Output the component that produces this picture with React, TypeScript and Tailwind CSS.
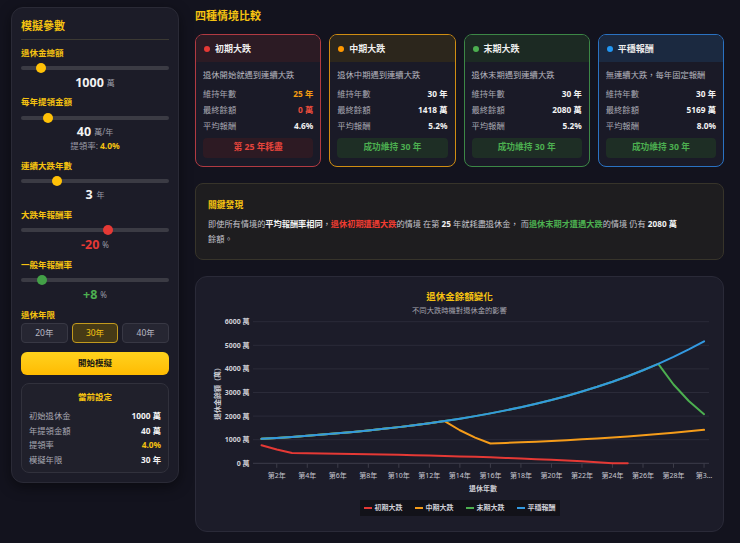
import React from "react";

type Slid = { thumb: string };

function Slider({ thumb }: Slid) {
  return (
    <div className="relative h-[14px] flex items-center">
      <div className="h-[4px] w-full rounded-full bg-[#3b3b44]" />
      <div className={"absolute top-[2px] h-[10px] w-[10px] rounded-full " + thumb} />
    </div>
  );
}

function Label({ children, cls }: { children: React.ReactNode; cls: string }) {
  return <div className={"h-4 leading-4 text-[8.5px] font-bold text-[#f5c211] " + cls}>{children}</div>;
}

function sim(crashStart: number | null): number[] {
  const out: number[] = [];
  let bal = 1000;
  for (let y = 1; y <= 30; y++) {
    const crash = crashStart !== null && y >= crashStart && y < crashStart + 3;
    bal = (bal - 40) * (crash ? 0.8 : 1.08);
    if (bal <= 0) {
      out.push(0);
      break;
    }
    out.push(bal);
  }
  return out;
}

const X = (year: number) => 260.5 + (year - 1) * 15.26 - 196;
const Y = (v: number) => 463.3 - v * 0.0236 - 315;

const cards = [
  {
    name: "初期大跌",
    dot: "bg-[#e53935]",
    border: "border-[#b13a42]",
    header: "bg-[#2c1b24]",
    desc: "退休開始就遇到連續大跌",
    years: "25 年",
    yearsCls: "text-[#f39c12]",
    final: "0 萬",
    finalCls: "text-[#e74c3c]",
    avg: "4.6%",
    status: "第 25 年耗盡",
    statusCls: "bg-[#2d1a23] text-[#e5453c]",
  },
  {
    name: "中期大跌",
    dot: "bg-[#ff9800]",
    border: "border-[#cf8d12]",
    header: "bg-[#2c261c]",
    desc: "退休中期遇到連續大跌",
    years: "30 年",
    yearsCls: "text-[#f2f2f2]",
    final: "1418 萬",
    finalCls: "text-[#f2f2f2]",
    avg: "5.2%",
    status: "成功維持 30 年",
    statusCls: "bg-[#1e2e25] text-[#4caf50]",
  },
  {
    name: "末期大跌",
    dot: "bg-[#4caf50]",
    border: "border-[#3c8746]",
    header: "bg-[#1c2a23]",
    desc: "退休末期遇到連續大跌",
    years: "30 年",
    yearsCls: "text-[#f2f2f2]",
    final: "2080 萬",
    finalCls: "text-[#f2f2f2]",
    avg: "5.2%",
    status: "成功維持 30 年",
    statusCls: "bg-[#1e2e25] text-[#4caf50]",
  },
  {
    name: "平穩報酬",
    dot: "bg-[#2196f3]",
    border: "border-[#2a72c2]",
    header: "bg-[#1b2940]",
    desc: "無連續大跌，每年固定報酬",
    years: "30 年",
    yearsCls: "text-[#f2f2f2]",
    final: "5169 萬",
    finalCls: "text-[#f2f2f2]",
    avg: "8.0%",
    status: "成功維持 30 年",
    statusCls: "bg-[#1e2e25] text-[#4caf50]",
  },
];

function Chart() {
  const series = [
    { data: sim(1), color: "#e53935" },
    { data: sim(14), color: "#f59c1a" },
    { data: sim(28), color: "#4caf50" },
    { data: sim(null), color: "#3399e0" },
  ];
  const ticks = [0, 1000, 2000, 3000, 4000, 5000, 6000];
  const evenYears = [2, 4, 6, 8, 10, 12, 14, 16, 18, 20, 22, 24, 26, 28, 30];
  return (
    <svg width={526} height={181} className="block">
      {ticks.map((t) => (
        <g key={t}>
          <line
            x1={56}
            x2={512}
            y1={Y(t)}
            y2={Y(t)}
            stroke={t === 0 ? "#3d3d4a" : "#2b2b39"}
            strokeWidth={1}
          />
          <text
            x={52.5}
            y={Y(t)}
            textAnchor="end"
            dominantBaseline="central"
            fontSize={7}
            fontWeight={700}
            fill="#cfcfd6"
          >
            {t} 萬
          </text>
        </g>
      ))}
      {evenYears.map((yr) => (
        <g key={yr}>
          <line x1={X(yr)} x2={X(yr)} y1={Y(0)} y2={Y(0) + 4.5} stroke="#3d3d4a" strokeWidth={1} />
          <text
            x={X(yr)}
            y={160.7}
            textAnchor="middle"
            dominantBaseline="central"
            fontSize={7}
            fill="#c8c8d0"
          >
            {yr === 30 ? "第3…" : `第${yr}年`}
          </text>
        </g>
      ))}
      {series.map((s, i) => (
        <polyline
          key={i}
          fill="none"
          stroke={s.color}
          strokeWidth={2}
          strokeLinejoin="round"
          strokeLinecap="round"
          points={s.data.map((v, j) => `${X(j + 1)},${Y(v)}`).join(" ")}
        />
      ))}
      <text
        x={286}
        y={173}
        textAnchor="middle"
        dominantBaseline="central"
        fontSize={7}
        fontWeight={700}
        fill="#cfcfd6"
      >
        退休年數
      </text>
      <text
        x={20}
        y={77}
        textAnchor="middle"
        dominantBaseline="central"
        fontSize={7}
        fontWeight={700}
        fill="#cfcfd6"
        transform="rotate(-90 20 77)"
      >
        退休金餘額（萬）
      </text>
    </svg>
  );
}

export default function App() {
  return (
    <div className="w-[740px] h-[543px] overflow-hidden bg-[#13131e] flex items-start pt-[7px] pl-[11px] font-['Noto_Sans','Noto_Sans_CJK_TC',sans-serif]">
      {/* Left panel */}
      <div className="w-[168px] shrink-0 rounded-xl border border-[#2a2a36] bg-[#1c1c28] px-[9px] pb-[9px] shadow-[0_4px_14px_rgba(0,0,0,0.45)] flex flex-col">
        <div className="pt-[8px] h-[28px] leading-[20px] text-[11px] font-bold text-[#f5c211]">模擬參數</div>
        <div className="mt-[3px] border-t border-[#3b3933]" />

        <Label cls="mt-[5px]">退休金總額</Label>
        <Slider thumb="left-[15px] bg-[#ffc107]" />
        <div className="mt-[1px] h-[14px] flex items-center justify-center">
          <span className="text-[12.5px] font-bold text-[#f2f2f2]">1000</span>
          <span className="ml-[3px] text-[8px] text-[#9a9aa5]">萬</span>
        </div>

        <Label cls="mt-[4px]">每年提領金額</Label>
        <div className="mt-[1px]">
          <Slider thumb="left-[22px] bg-[#ffc107]" />
        </div>
        <div className="h-[14px] flex items-center justify-center">
          <span className="text-[12.5px] font-bold text-[#f2f2f2]">40</span>
          <span className="ml-[3px] text-[8px] text-[#9a9aa5]">萬/年</span>
        </div>
        <div className="h-[14px] flex items-center justify-center text-[8.5px] text-[#9a9aa5]">
          提領率: <span className="ml-[2px] font-bold text-[#f5c211]">4.0%</span>
        </div>

        <Label cls="mt-[5px]">連續大跌年數</Label>
        <Slider thumb="left-[31px] bg-[#ffc107]" />
        <div className="h-[14px] flex items-center justify-center">
          <span className="text-[12.5px] font-bold text-[#f2f2f2]">3</span>
          <span className="ml-[4px] text-[8px] text-[#9a9aa5]">年</span>
        </div>

        <Label cls="mt-[5px]">大跌年報酬率</Label>
        <Slider thumb="left-[82px] bg-[#e53935]" />
        <div className="mt-[1px] h-[14px] flex items-center justify-center">
          <span className="text-[12.5px] font-bold text-[#e53935]">-20</span>
          <span className="ml-[3px] text-[8px] text-[#9a9aa5]">%</span>
        </div>

        <Label cls="mt-[5px]">一般年報酬率</Label>
        <Slider thumb="left-[16px] bg-[#43a047]" />
        <div className="mt-[1px] h-[14px] flex items-center justify-center">
          <span className="text-[12.5px] font-bold text-[#4caf50]">+8</span>
          <span className="ml-[3px] text-[8px] text-[#9a9aa5]">%</span>
        </div>

        <Label cls="mt-[5px]">退休年限</Label>
        <div className="grid grid-cols-3 gap-[4px] h-[20px]">
          <div className="flex items-center justify-center rounded-[4px] border border-[#383844] bg-[#262632] text-[8.5px] text-[#b8b8c2]">20年</div>
          <div className="flex items-center justify-center rounded-[4px] border border-[#c29a1e] bg-[#463a16] text-[8.5px] text-[#f5c211]">30年</div>
          <div className="flex items-center justify-center rounded-[4px] border border-[#383844] bg-[#262632] text-[8.5px] text-[#b8b8c2]">40年</div>
        </div>

        <div className="mt-[9px] h-[23px] rounded-md bg-linear-to-b from-[#ffd21c] to-[#ffbb00] flex items-center justify-center text-[8.5px] font-bold text-[#1c1a14]">開始模擬</div>

        <div className="mt-[8px] h-[90px] rounded-lg border border-[#31313c] bg-[#20202b] px-[7px] pt-[6px]">
          <div className="h-[14px] leading-[14px] text-center text-[8.5px] font-bold text-[#f5c211]">當前設定</div>
          <div className="mt-[5px]">
            {[
              ["初始退休金", "1000 萬", "text-[#f2f2f2]"],
              ["年提領金額", "40 萬", "text-[#f2f2f2]"],
              ["提領率", "4.0%", "text-[#f5c211]"],
              ["模擬年限", "30 年", "text-[#f2f2f2]"],
            ].map(([a, b, c]) => (
              <div key={a} className="h-[14.5px] flex items-center justify-between text-[8.3px]">
                <span className="text-[#a8a8b2]">{a}</span>
                <span className={"font-bold " + c}>{b}</span>
              </div>
            ))}
          </div>
        </div>
      </div>

      {/* Right content */}
      <div className="ml-[16px] w-[529px] shrink-0">
        <div className="mt-[1px] h-4 leading-4 text-[11px] font-bold text-[#f5c211]">四種情境比較</div>

        <div className="mt-[10px] grid grid-cols-4 gap-[8px] h-[133px]">
          {cards.map((c) => (
            <div key={c.name} className={"rounded-lg border overflow-hidden bg-[#1a1a27] flex flex-col " + c.border}>
              <div className={"h-[27px] shrink-0 flex items-center px-[8px] " + c.header}>
                <span className={"w-[6px] h-[6px] rounded-full " + c.dot} />
                <span className="ml-[5px] text-[9px] font-bold text-[#eeeeee]">{c.name}</span>
              </div>
              <div className="px-[7px] pt-[6px]">
                <div className="h-[14px] leading-[14px] text-[8.3px] text-[#b6b6bf] whitespace-nowrap">{c.desc}</div>
                <div className="mt-[4px]">
                  <div className="h-4 flex items-center justify-between text-[8.3px]">
                    <span className="text-[#a8a8b2]">維持年數</span>
                    <span className={"font-bold " + c.yearsCls}>{c.years}</span>
                  </div>
                  <div className="h-4 flex items-center justify-between text-[8.3px]">
                    <span className="text-[#a8a8b2]">最終餘額</span>
                    <span className={"font-bold " + c.finalCls}>{c.final}</span>
                  </div>
                  <div className="h-4 flex items-center justify-between text-[8.3px]">
                    <span className="text-[#a8a8b2]">平均報酬</span>
                    <span className="font-bold text-[#f2f2f2]">{c.avg}</span>
                  </div>
                </div>
                <div className={"mt-[4px] h-5 rounded-[4px] flex items-center justify-center text-[8.7px] font-bold " + c.statusCls}>
                  {c.status}
                </div>
              </div>
            </div>
          ))}
        </div>

        <div className="mt-[16px] h-[77px] rounded-lg border border-[#37342a] bg-[#1e1d1f] px-[12px] pt-[14px]">
          <div className="h-[14px] leading-[14px] text-[8.8px] font-bold text-[#f5c211]">關鍵發現</div>
          <p className="mt-[5px] max-w-[474px] text-[8.2px] leading-[14.5px] text-[#c4c4cc]">
            即使所有情境的<span className="font-bold text-[#f2f2f2]">平均報酬率相同</span>，
            <span className="font-bold text-[#f03c32]">退休初期遭遇大跌</span>的情境 在第{" "}
            <span className="font-bold text-[#f2f2f2]">25</span> 年就耗盡退休金， 而
            <span className="font-bold text-[#4caf50]">退休末期才遭遇大跌</span>的情境 仍有{" "}
            <span className="font-bold text-[#f2f2f2]">2080 萬</span>餘額。
          </p>
        </div>

        <div className="mt-[16px] h-[256px] rounded-xl border border-[#2a2a38] bg-[#1c1c29] flex flex-col items-center">
          <div className="mt-[13px] h-[14px] leading-[14px] text-[9.5px] font-bold text-[#f5c211]">退休金餘額變化</div>
          <div className="mt-[1px] h-[10px] leading-[10px] text-[7.3px] text-[#a4a4ae]">不同大跌時機對退休金的影響</div>
          <Chart />
          <div className="mt-[4px] h-[16px] bg-[#121219] px-[4px] flex items-center gap-[12px]">
            {[
              ["初期大跌", "bg-[#e53935]"],
              ["中期大跌", "bg-[#f59c1a]"],
              ["末期大跌", "bg-[#4caf50]"],
              ["平穩報酬", "bg-[#3399e0]"],
            ].map(([n, c]) => (
              <div key={n} className="flex items-center">
                <span className={"w-[8px] h-[2px] " + c} />
                <span className="ml-[3px] text-[7px] font-bold text-[#d0d0d8]">{n}</span>
              </div>
            ))}
          </div>
        </div>
      </div>
    </div>
  );
}
